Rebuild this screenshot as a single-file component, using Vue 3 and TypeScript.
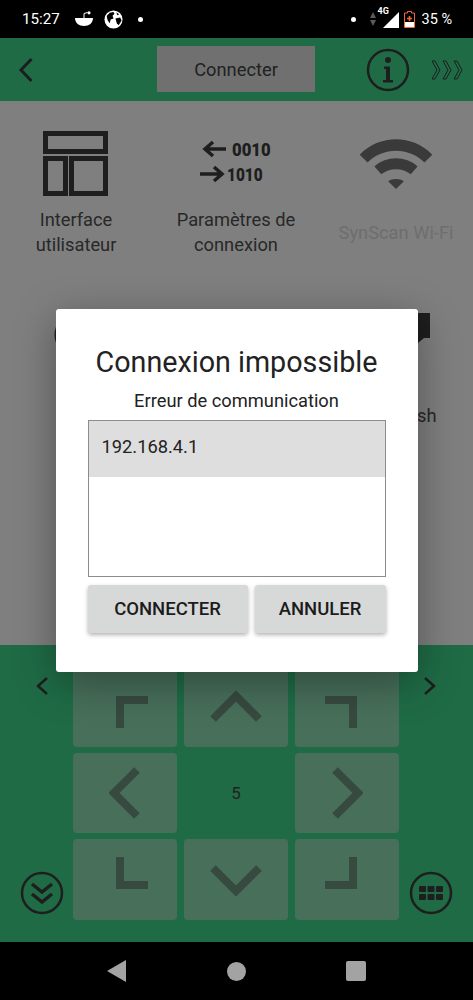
<script setup lang="ts">
interface MenuItem {
  icon: string;
  label: string[];
  disabled?: boolean;
}

// la seconde rangée est presque entièrement cachée par le dialogue
const menuItems: MenuItem[] = [
  { icon: "layout", label: ["Interface", "utilisateur"] },
  { icon: "binary", label: ["Paramètres de", "connexion"] },
  { icon: "wifi", label: ["SynScan Wi-Fi"], disabled: true },
  { icon: "ring", label: [] },
  { icon: "blank", label: [] },
  { icon: "tag", label: ["App Flash"] },
];
</script>

<template>
  <div class="phone">
    <div class="status-bar">
      <div class="status-left">
        <span class="clock">15:27</span>
        <svg class="ic-reddit" viewBox="0 0 20 16" width="20" height="16">
          <path d="M1 7h18c0 5-4 8-9 8S1 12 1 7z" fill="#fff" />
          <path d="M10 7V2.5l3.5-1" stroke="#fff" stroke-width="1" fill="none" />
          <circle cx="15" cy="1.8" r="1.6" fill="#fff" />
        </svg>
        <svg class="ic-globe" viewBox="0 0 20 20" width="19" height="19">
          <circle cx="10" cy="10" r="9.5" fill="#fff" />
          <path d="M3 6l3-3 4-1 1 2-2 2 1 3-3 1-1 4-2-3-1-3z" fill="#000" />
          <path d="M12 9l5-1 1.5 3-3 5-2-2z" fill="#000" />
          <path d="M13 2.5l3 2-2 1z" fill="#000" />
        </svg>
        <span class="dot"></span>
      </div>
      <div class="status-right">
        <span class="dot"></span>
        <svg viewBox="0 0 6 14" width="6" height="14" class="ic-data">
          <path d="M3 0l3 6H0z" fill="#5a5a5a" />
          <path d="M3 14l3-6H0z" fill="#5a5a5a" />
        </svg>
        <div class="signal">
          <span class="four-g">4G</span>
          <svg viewBox="0 0 16 16" width="16" height="16">
            <path d="M16 0v16H0z" fill="#fff" />
          </svg>
        </div>
        <svg viewBox="0 0 11 17" width="11" height="17" class="ic-battery">
          <path d="M3.5 0.5h4V2h3v14.500h-10V2h3z" fill="none" stroke="#f0683a" stroke-width="1" />
          <rect x="1" y="11" width="9" height="5" fill="#fff" />
          <path d="M5.500 5v5M3 7.500h5" stroke="#f0683a" stroke-width="1.600" />
        </svg>
        <span class="percent">35 %</span>
      </div>
    </div>

    <div class="app">
      <header class="top-bar">
        <svg class="back" viewBox="0 0 16 26" width="16" height="26">
          <path d="M13.5 2L3 13l10.500 11" fill="none" stroke="#3a3a3a" stroke-width="3" />
        </svg>
        <button class="connect-tab">Connecter</button>
        <div class="top-right">
          <svg viewBox="0 0 44 44" width="44" height="44">
            <circle cx="22" cy="22" r="20" fill="none" stroke="#3c3c3c" stroke-width="2.5" />
            <circle cx="22" cy="12" r="3" fill="#3c3c3c" />
            <path d="M18 18.500h6V32h3v2.500H17V32h3v-11h-2z" fill="#3c3c3c" />
          </svg>
          <svg class="chevrons" viewBox="0 0 32 20" width="32" height="20">
            <g fill="none" stroke="#3c3c3c" stroke-width="1">
              <path d="M1 1h3l5 9-5 9H1l5-9z" />
              <path d="M12 1h3l5 9-5 9h-3l5-9z" />
              <path d="M23 1h3l5 9-5 9h-3l5-9z" />
            </g>
          </svg>
        </div>
      </header>

      <main class="content">
        <div class="menu-grid">
          <div v-for="item in menuItems" :key="item.icon" class="menu-item" :class="{ off: item.disabled }">
            <div class="menu-icon">
              <svg v-if="item.icon === 'layout'" class="ic-layout" viewBox="0 0 65 65" width="65" height="65">
                <g fill="none" stroke="#3c3c3c" stroke-width="5">
                  <rect x="2.5" y="2.5" width="60" height="18" />
                  <rect x="2.5" y="27.5" width="20" height="35" />
                  <rect x="28.5" y="27.5" width="34" height="35" />
                </g>
              </svg>
              <svg v-else-if="item.icon === 'binary'" viewBox="-4 -6 80 56" width="80" height="56">
                <path d="M26 8H6M13 1L5 8l8 7" fill="none" stroke="#3c3c3c" stroke-width="3.5" />
                <path d="M0 33h20M14 26l8 7-8 7" fill="none" stroke="#3c3c3c" stroke-width="3.5" />
                <text class="bits" transform="translate(32 15) scale(0.88 1)">0010</text>
                <text class="bits" transform="translate(27 40) scale(0.81 1)">1010</text>
              </svg>
              <svg v-else-if="item.icon === 'wifi'" viewBox="0 0 74 52" width="74" height="51">
                <path d="M0 17C20 -4 54 -4 74 17l-8 8C50 9 24 9 8 25z" fill="#747474" />
                <path d="M15 29c12-11 32-11 44 0l-7 8c-8-7-22-7-30 0z" fill="#747474" />
                <path d="M29 44c4-3 12-3 16 0l-8 8z" fill="#747474" />
              </svg>
              <svg v-else-if="item.icon === 'ring'" viewBox="0 0 66 66" width="66" height="66">
                <circle cx="33" cy="22" r="19" fill="none" stroke="#3c3c3c" stroke-width="5" />
              </svg>
              <svg v-else-if="item.icon === 'tag'" viewBox="0 0 68 66" width="68" height="66">
                <path d="M0 0H68V26H62L56 31H0z" fill="#3c3c3c" transform="translate(0 -1)" />
              </svg>
            </div>
            <div class="menu-label">
              <span v-for="line in item.label" :key="line">{{ line }}</span>
            </div>
          </div>
        </div>
      </main>

      <section class="pad-panel">
        <svg class="side-arrow" viewBox="0 0 14 20" width="14" height="20">
          <path d="M12 2l-9 8 9 8" fill="none" stroke="#3c3c3c" stroke-width="2.5" />
        </svg>
        <div class="pad">
          <div class="key tl"><svg viewBox="0 0 32 32" width="32" height="32"><path d="M4 32V4h28" /></svg></div>
          <div class="key"><svg viewBox="0 0 52 32" width="52" height="32"><path d="M3 28L26 5l23 23" /></svg></div>
          <div class="key tr"><svg viewBox="0 0 32 32" width="32" height="32"><path d="M0 4h28v28" /></svg></div>
          <div class="key"><svg viewBox="0 0 32 52" width="32" height="52"><path d="M28 3L5 26l23 23" /></svg></div>
          <div class="speed">5</div>
          <div class="key"><svg viewBox="0 0 32 52" width="32" height="52"><path d="M4 3l23 23L4 49" /></svg></div>
          <div class="key bl"><svg viewBox="0 0 32 32" width="32" height="32"><path d="M4 0v28h28" /></svg></div>
          <div class="key"><svg viewBox="0 0 52 32" width="52" height="32"><path d="M3 4l23 23L49 4" /></svg></div>
          <div class="key br"><svg viewBox="0 0 32 32" width="32" height="32"><path d="M0 28h28V0" /></svg></div>
        </div>
        <svg class="side-arrow right" viewBox="0 0 14 20" width="14" height="20">
          <path d="M2 2l9 8-9 8" fill="none" stroke="#3c3c3c" stroke-width="2.5" />
        </svg>
        <svg class="round left" viewBox="0 0 44 44" width="44" height="44">
          <circle cx="22" cy="22" r="20" fill="none" stroke="#3c3c3c" stroke-width="2.5" />
          <path d="M12 13l10 8 10-8M12 23l10 8 10-8" fill="none" stroke="#3c3c3c" stroke-width="3.5" />
        </svg>
        <svg class="round right" viewBox="0 0 44 44" width="44" height="44">
          <circle cx="22" cy="22" r="20" fill="none" stroke="#3c3c3c" stroke-width="2.5" />
          <g fill="#3c3c3c">
            <rect x="10" y="15" width="7" height="6" rx="1" />
            <rect x="18.5" y="15" width="7" height="6" rx="1" />
            <rect x="27" y="15" width="7" height="6" rx="1" />
            <rect x="10" y="23" width="7" height="6" rx="1" />
            <rect x="18.5" y="23" width="7" height="6" rx="1" />
            <rect x="27" y="23" width="7" height="6" rx="1" />
          </g>
        </svg>
      </section>

      <div class="scrim">
        <div class="dialog">
          <h2 class="dialog-title">Connexion impossible</h2>
          <p class="dialog-msg">Erreur de communication</p>
          <div class="host-list">
            <div class="host-row">192.168.4.1</div>
          </div>
          <div class="dialog-actions">
            <button class="action wide">CONNECTER</button>
            <button class="action">ANNULER</button>
          </div>
        </div>
      </div>
    </div>

    <nav class="nav-bar">
      <svg viewBox="0 0 20 22" width="20" height="22"><path d="M19 0v22L0 11z" fill="#a3a3a3" /></svg>
      <span class="nav-home"></span>
      <span class="nav-square"></span>
    </nav>
  </div>
</template>

<style>
html,
body {
  margin: 0;
  background: #000;
}
</style>

<style scoped>
.phone {
  width: 473px;
  height: 1000px;
  display: flex;
  flex-direction: column;
  font-family: Roboto, "Liberation Sans", sans-serif;
  overflow: hidden;
}

.status-bar {
  height: 38px;
  background: #000;
  color: #fff;
  display: flex;
  align-items: center;
  justify-content: space-between;
  padding: 0 21px 0 22px;
  font-size: 14.5px;
}

.status-left,
.status-right {
  display: flex;
  align-items: center;
}

.clock {
  font-size: 15.2px;
  margin-right: 14px;
}

.ic-globe {
  margin-left: 10px;
}

.dot {
  width: 5px;
  height: 5px;
  border-radius: 50%;
  background: #fff;
}

.status-left .dot {
  margin-left: 15px;
}

.ic-data {
  margin-left: 14px;
}

.signal {
  position: relative;
  width: 16px;
  height: 16px;
  margin-left: 7px;
  margin-top: 2px;
}

.four-g {
  position: absolute;
  left: -6px;
  top: -6px;
  font-size: 9px;
  font-weight: 700;
}

.ic-battery {
  margin-left: 5px;
}

.percent {
  margin-left: 6px;
}

.app {
  position: relative;
  flex: 1;
  display: flex;
  flex-direction: column;
  min-height: 0;
}

.top-bar {
  height: 63px;
  background: #3fd68c;
  position: relative;
  display: flex;
  align-items: center;
  justify-content: space-between;
  padding: 0 10px 0 18px;
}

.connect-tab {
  position: absolute;
  left: 157px;
  top: 8px;
  width: 158px;
  height: 46px;
  border: 0;
  background: #e0e0e0;
  color: #444;
  font: 18.3px Roboto, sans-serif;
}

.top-right {
  display: flex;
  align-items: center;
  gap: 21px;
}

.content {
  flex: 1;
  background: #fff;
  padding-top: 29px;
  overflow: hidden;
}

.menu-grid {
  display: grid;
  grid-template-columns: repeat(3, 160px);
  row-gap: 56px;
  margin-left: -4px;
}

.menu-item {
  display: flex;
  flex-direction: column;
  align-items: center;
  color: #505050;
  font-size: 18.3px;
  line-height: 25px;
}

.menu-icon {
  height: 66px;
  display: flex;
  align-items: center;
  justify-content: center;
  margin-bottom: 11px;
}

.ic-layout {
  margin-left: -2px;
}

.menu-label {
  display: flex;
  flex-direction: column;
  align-items: center;
  min-height: 50px;
  justify-content: center;
  white-space: nowrap;
}

.off {
  color: #dcdcdc;
}

.bits {
  font: 900 19px Roboto, sans-serif;
  fill: #3c3c3c;
}

.pad-panel {
  height: 297px;
  background: #3fd68c;
  position: relative;
  display: flex;
  justify-content: center;
}

.pad {
  display: grid;
  grid-template-columns: 104px 104px 104px;
  grid-template-rows: 80px 80px 81px;
  column-gap: 7px;
  row-gap: 6px;
  margin-top: 22px;
  height: 253px;
  margin-left: -1px;
}

.key {
  background: #8fdfb5;
  border-radius: 4px;
  display: flex;
  align-items: center;
  justify-content: center;
  box-sizing: border-box;
}

.key.tl {
  padding: 10px 0 0 13px;
}

.key.tr {
  padding: 10px 13px 0 0;
}

.key.bl {
  padding: 0 0 13px 13px;
}

.key.br {
  padding: 0 13px 13px 0;
}

.key path {
  fill: none;
  stroke: #6f9580;
  stroke-width: 8;
}

.speed {
  display: flex;
  align-items: center;
  justify-content: center;
  color: #444;
  font-size: 17px;
}

.side-arrow {
  position: absolute;
  left: 35px;
  top: 31px;
}

.side-arrow.right {
  left: auto;
  right: 36px;
}

.round {
  position: absolute;
  top: 226px;
}

.round.left {
  left: 20px;
}

.round.right {
  right: 20px;
}

.scrim {
  position: absolute;
  inset: 0;
  background: rgba(0, 0, 0, 0.5);
  display: flex;
  justify-content: center;
  align-items: flex-start;
}

.dialog {
  margin-top: 271px;
  width: 362px;
  height: 363px;
  box-sizing: border-box;
  background: #fff;
  border-radius: 3px;
  padding: 32px 32px 0;
  color: #222;
  box-shadow: 0 10px 40px rgba(0, 0, 0, 0.35);
  display: flex;
  flex-direction: column;
}

.dialog-title {
  margin: 0;
  font-size: 28.7px;
  font-weight: 400;
  line-height: 42px;
  text-align: center;
}

.dialog-msg {
  margin: 6px 0 0;
  font-size: 18.3px;
  line-height: 24px;
  text-align: center;
}

.host-list {
  margin-top: 7px;
  height: 155px;
  border: 1px solid #8c8c8c;
  border-width: 1px 1.5px 1.5px;
  background: #fff;
}

.host-row {
  height: 56px;
  background: #dedede;
  padding-left: 13px;
  font-size: 18.3px;
  line-height: 51px;
}

.dialog-actions {
  display: flex;
  gap: 7px;
  margin-top: 8px;
}

.action {
  flex: 1;
  height: 48px;
  border: 0;
  border-radius: 3px;
  background: #d7d8d8;
  color: #1c1c1c;
  font: 500 18.5px Roboto, sans-serif;
  box-shadow: 0 2px 4px rgba(0, 0, 0, 0.3);
}

.action.wide {
  flex: 0 0 160px;
}

.nav-bar {
  height: 58px;
  background: #000;
  display: flex;
  align-items: center;
  justify-content: center;
  gap: 100px;
}

.nav-home {
  width: 19px;
  height: 19px;
  border-radius: 50%;
  background: #a3a3a3;
}

.nav-square {
  width: 20px;
  height: 20px;
  border-radius: 2px;
  background: #a3a3a3;
}
</style>
